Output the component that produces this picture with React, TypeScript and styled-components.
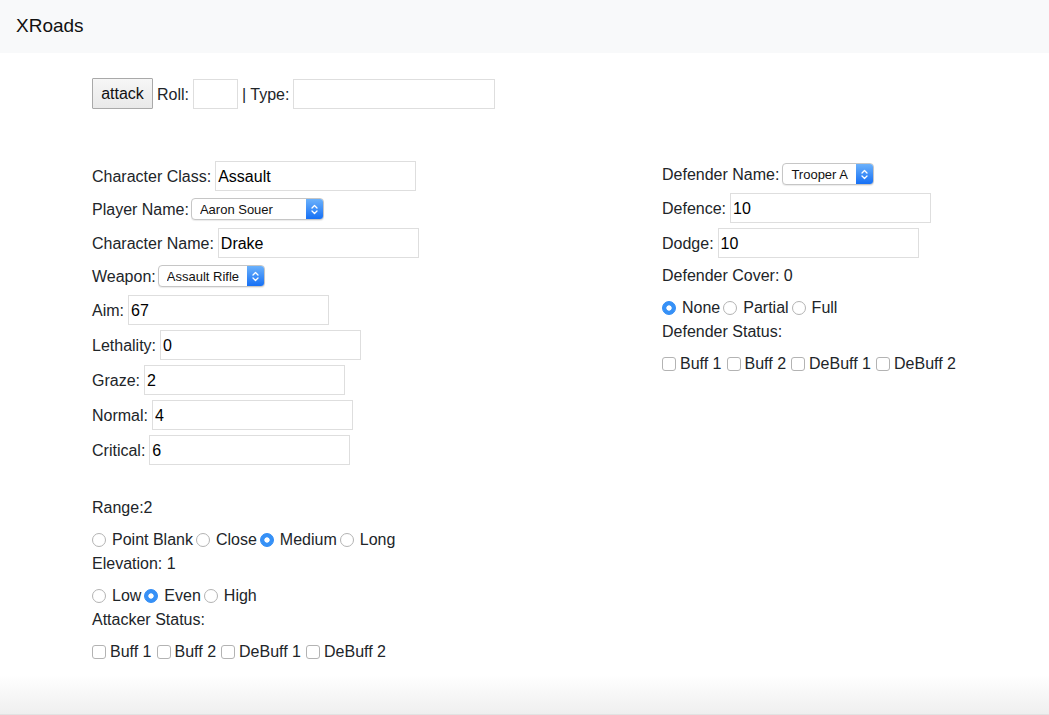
import React from "react";
import styled, { createGlobalStyle } from "styled-components";

const GlobalStyle = createGlobalStyle`
  html, body { margin: 0; padding: 0; }
  body {
    font-family: "Liberation Sans", Arial, sans-serif;
    font-size: 16px;
    line-height: 1.5;
    color: #212529;
    background: #fff;
  }
  * { box-sizing: border-box; }
`;

const Page = styled.div`
  min-height: 100vh;
  display: flex;
  flex-direction: column;
`;

const Navbar = styled.nav`
  height: 53px;
  background: #f8f9fa;
  display: flex;
  align-items: center;
  padding: 0 16px;
`;

const Brand = styled.span`
  font-size: 19px;
  color: #111;
`;

const Main = styled.main`
  padding: 25px 0 0 92px;
`;

const AttackBar = styled.div`
  display: flex;
  align-items: center;
  gap: 4px;
  height: 31px;
`;

const AttackButton = styled.button`
  height: 31px;
  width: 61px;
  padding: 0;
  font: 16px "Liberation Sans", Arial, sans-serif;
  color: #111;
  background: linear-gradient(#f6f6f6, #e9e9e9);
  border: 1px solid #a9a9a9;
  border-radius: 1px;
`;

const TextInput = styled.input<{ $w?: number }>`
  width: ${(p) => p.$w ?? 201}px;
  height: 30px;
  padding: 2px 2px 0;
  border: 1px solid #dedede;
  font: 16px "Liberation Sans", Arial, sans-serif;
  color: #000;
  background: #fff;
  outline: none;
`;

const Columns = styled.div`
  display: grid;
  grid-template-columns: 570px 1fr;
  margin-top: 52px;
`;

const Column = styled.section`
  display: flex;
  flex-direction: column;
  align-items: flex-start;
`;

const InputRow = styled.div`
  display: flex;
  align-items: center;
  gap: 4px;
  height: 30px;
  margin-bottom: 5px;
`;

const RowText = styled.span`
  padding-top: 2px;
`;

const SelectRow = styled.div<{ $gap?: number }>`
  display: flex;
  align-items: center;
  gap: ${(p) => p.$gap ?? 2}px;
  height: 22px;
  margin: 2px 0 8px;
`;

const FieldLabel = styled.label<{ $top?: number }>`
  display: block;
  line-height: 24px;
  padding-top: 1px;
  height: 24px;
  margin-top: ${(p) => p.$top ?? 0}px;
  margin-bottom: 8px;
`;

const OptionLine = styled.div`
  display: flex;
  align-items: center;
  height: 24px;
  padding-top: 2px;
`;

const OptionItem = styled.label<{ $first?: boolean; $space: number }>`
  display: flex;
  align-items: center;
  margin-left: ${(p) => (p.$first ? 0 : p.$space)}px;
`;

const Radio = styled.input.attrs({ type: "radio" })`
  appearance: none;
  width: 14px;
  height: 14px;
  margin: 0 6px 0 0;
  border-radius: 50%;
  border: 1px solid #b3b3b3;
  background: #fff;
  &:checked {
    border-color: #2f8bf5;
    background: radial-gradient(circle, #fff 0 2.3px, #3691f7 3px);
  }
`;

const Checkbox = styled.input.attrs({ type: "checkbox" })`
  appearance: none;
  width: 14px;
  height: 14px;
  margin: 0 4px 0 0;
  border-radius: 3px;
  border: 1px solid #b3b3b3;
  background: #fff;
`;

const SelectBox = styled.span<{ $w: number }>`
  display: inline-flex;
  width: ${(p) => p.$w}px;
  height: 22px;
  border: 1px solid #c6c6c6;
  border-radius: 4px;
  overflow: hidden;
  background: #fff;
  box-shadow: 0 1px 1px rgba(0, 0, 0, 0.08);
`;

const NativeSelect = styled.select`
  appearance: none;
  flex: 1;
  min-width: 0;
  border: none;
  outline: none;
  background: transparent;
  padding: 0 0 0 8px;
  font: 13px "Liberation Sans", Arial, sans-serif;
  color: #111;
`;

const ArrowBox = styled.span`
  width: 17px;
  display: flex;
  align-items: center;
  justify-content: center;
  background: linear-gradient(#6bb1fb, #1670f5);
`;

const Footer = styled.footer`
  margin-top: auto;
  height: 40px;
  background: linear-gradient(#ffffff, #efefef);
  border-bottom: 1px solid #e2e2e2;
`;

const Arrows = () => (
  <svg width="9" height="13" viewBox="0 0 9 13" fill="none">
    <path d="M2 5 L4.5 2.5 L7 5" stroke="#fff" strokeWidth="1.3" strokeLinecap="round" strokeLinejoin="round" />
    <path d="M2 8 L4.5 10.5 L7 8" stroke="#fff" strokeWidth="1.3" strokeLinecap="round" strokeLinejoin="round" />
  </svg>
);

const Select = ({ width, value }: { width: number; value: string }) => (
  <SelectBox $w={width}>
    <NativeSelect defaultValue={value}>
      <option value={value}>{value}</option>
    </NativeSelect>
    <ArrowBox>
      <Arrows />
    </ArrowBox>
  </SelectBox>
);

const RadioGroup = ({ name, options, checked }: { name: string; options: string[]; checked: string }) => (
  <OptionLine>
    {options.map((o, i) => (
      <OptionItem key={o} $first={i === 0} $space={3}>
        <Radio name={name} defaultChecked={o === checked} />
        {o}
      </OptionItem>
    ))}
  </OptionLine>
);

const CheckGroup = ({ options }: { options: string[] }) => (
  <OptionLine>
    {options.map((o, i) => (
      <OptionItem key={o} $first={i === 0} $space={5}>
        <Checkbox />
        {o}
      </OptionItem>
    ))}
  </OptionLine>
);

const Field = ({ label, value }: { label: string; value: string }) => (
  <InputRow>
    <RowText>{label}</RowText>
    <TextInput defaultValue={value} />
  </InputRow>
);

const statuses = ["Buff 1", "Buff 2", "DeBuff 1", "DeBuff 2"];

export default function App() {
  return (
    <Page>
      <GlobalStyle />
      <Navbar>
        <Brand>XRoads</Brand>
      </Navbar>
      <Main>
        <AttackBar>
          <AttackButton>attack</AttackButton>
          <RowText>Roll:</RowText>
          <TextInput $w={45} />
          <RowText>| Type:</RowText>
          <TextInput $w={202} />
        </AttackBar>
        <Columns>
          <Column>
            <Field label="Character Class:" value="Assault" />
            <SelectRow>
              <RowText>Player Name:</RowText>
              <Select width={133} value="Aaron Souer" />
            </SelectRow>
            <Field label="Character Name:" value="Drake" />
            <SelectRow>
              <RowText>Weapon:</RowText>
              <Select width={107} value="Assault Rifle" />
            </SelectRow>
            <Field label="Aim:" value="67" />
            <Field label="Lethality:" value="0" />
            <Field label="Graze:" value="2" />
            <Field label="Normal:" value="4" />
            <Field label="Critical:" value="6" />
            <FieldLabel $top={25}>Range:2</FieldLabel>
            <RadioGroup name="range" options={["Point Blank", "Close", "Medium", "Long"]} checked="Medium" />
            <FieldLabel>Elevation: 1</FieldLabel>
            <RadioGroup name="elevation" options={["Low", "Even", "High"]} checked="Even" />
            <FieldLabel>Attacker Status:</FieldLabel>
            <CheckGroup options={statuses} />
          </Column>
          <Column>
            <SelectRow $gap={3}>
              <RowText>Defender Name:</RowText>
              <Select width={92} value="Trooper A" />
            </SelectRow>
            <Field label="Defence:" value="10" />
            <Field label="Dodge:" value="10" />
            <FieldLabel>Defender Cover: 0</FieldLabel>
            <RadioGroup name="cover" options={["None", "Partial", "Full"]} checked="None" />
            <FieldLabel>Defender Status:</FieldLabel>
            <CheckGroup options={statuses} />
          </Column>
        </Columns>
      </Main>
      <Footer />
    </Page>
  );
}
